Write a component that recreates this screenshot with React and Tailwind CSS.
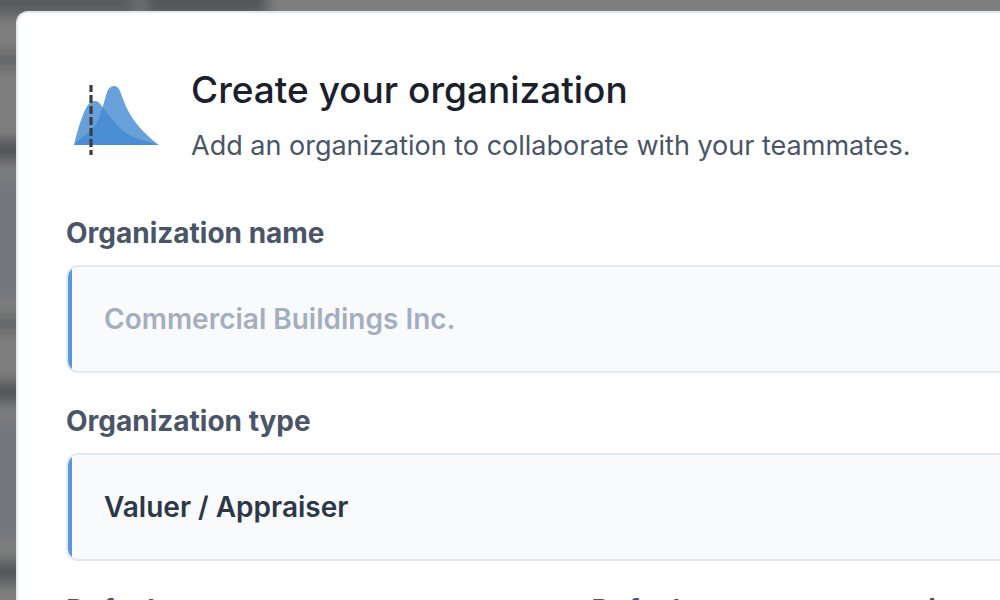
const label = "block text-[28px] leading-[36px] font-bold text-[#4a5568]";
const field =
  "block h-[108px] w-full appearance-none rounded-xl border-2 border-[#e2e8f0] bg-[#f9fafc] px-9 text-[28px] font-semibold placeholder:text-[#a3afc0] placeholder:opacity-100 outline-none";

function Field({ id, text, className, children }) {
  return (
    <div className={className}>
      <label htmlFor={id} className={label}>{text}</label>
      <div className="relative mt-3.5">
        {children}
        <span className="pointer-events-none absolute inset-0.5 overflow-hidden rounded-[10px]">
          <span className="block h-full w-1 bg-[#5a96dc]" />
        </span>
      </div>
    </div>
  );
}

function Logo() {
  return (
    <svg viewBox="0 0 110 100" className="-ml-1.5 h-[100px] w-[110px] shrink-0" aria-hidden="true">
      <g fill="#4189d0" fillOpacity="0.795">
        <path d="M14 75C17 62 21 49 25 40C28 34 31 31 35 31C39 31 41 35 44 39C51 48 58 57 66 63C75 69 87 71 98 75Z" />
        <path d="M14 75C20 67 29 64 34 57C39 50 42 40 45 29C47 21 49 16 54 16C59 16 60 21 63 29C70 49 83 63 99 75Z" />
      </g>
      <path d="M31 15V85" stroke="#3b3b41" strokeWidth="3.2" strokeDasharray="8 3" strokeDashoffset="1" />
    </svg>
  );
}

function Backdrop() {
  return (
    <div className="absolute inset-0 blur-[7px]" aria-hidden="true">
      <div className="-mt-3 -ml-4 flex gap-2">
        <div className="h-7 w-[153px] bg-[#5a5b5d]" />
        <div className="h-7 w-[122px] bg-[#545558]" />
      </div>
      <div className="-ml-4 flex w-14 flex-col">
        <div className="mt-9 h-4 bg-[#626365]" />
        <div className="mt-[72px] h-5 bg-[#515255]" />
        <div className="mt-4 h-[124px] bg-[#74787c]" />
        <div className="mt-4 h-4 bg-[#626365]" />
        <div className="mt-[50px] h-5 bg-[#515255]" />
        <div className="mt-4 h-[124px] bg-[#74787c]" />
        <div className="mt-5 h-5 bg-[#515255]" />
      </div>
    </div>
  );
}

export default function App() {
  return (
    <div className="relative h-screen overflow-hidden bg-[#7f7f7f] font-['Inter','Liberation_Sans',sans-serif]">
      <Backdrop />
      <main
        role="dialog"
        aria-labelledby="title"
        className="relative mt-[11px] ml-4 rounded-tl-xl border-t-2 border-l-2 border-[#e2e8f0] bg-white pt-[57px] pb-12 pl-12"
      >
        <header className="flex items-start">
          <Logo />
          <div className="ml-[21px]">
            <h1 id="title" className="text-[37px] leading-[40px] font-medium text-[#1a202c]">Create your organization</h1>
            <p className="mt-[18px] text-[27px] leading-[36px] whitespace-nowrap text-[#4a5568]">
              Add an organization to collaborate with your teammates.
            </p>
          </div>
        </header>
        <form className="mt-[45px]">
          <Field id="name" text="Organization name" className="-mr-4">
            <input id="name" type="text" placeholder="Commercial Buildings Inc." className={field} />
          </Field>
          <Field id="type" text="Organization type" className="mt-[30px] -mr-4">
            <select id="type" className={`${field} text-[#2d3748]`}>
              <option>Valuer / Appraiser</option>
            </select>
          </Field>
          <div className="mt-[31px] grid grid-cols-[9fr_7fr]">
            <Field id="currency" text="Default currency" className="pr-16">
              <input id="currency" type="text" className={field} />
            </Field>
            <Field id="units" text="Default measurement units">
              <input id="units" type="text" className={field} />
            </Field>
          </div>
        </form>
      </main>
    </div>
  );
}
